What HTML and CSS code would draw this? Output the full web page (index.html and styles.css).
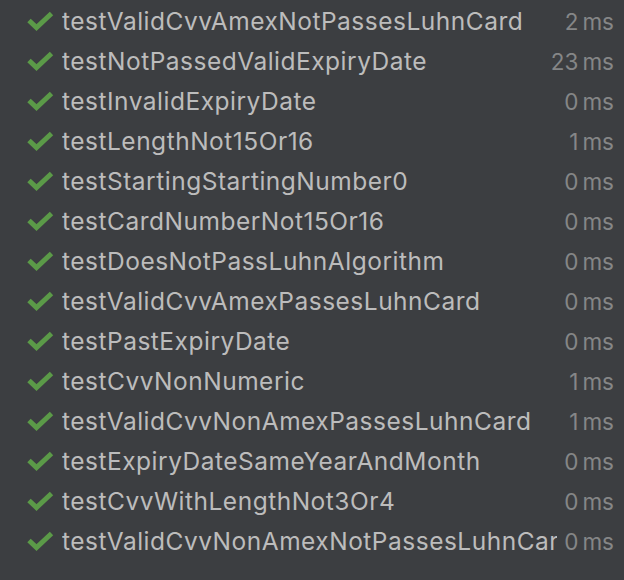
FILE: index.html
```html
<!DOCTYPE html>
<html>
<head>
<meta charset="utf-8">
<link rel="stylesheet" href="styles.css">
</head>
<body>
<div class="list">
  <div class="row"><svg class="check" viewBox="0 0 27 20"><path d="M2 9.5 L9.5 16.5 L24.5 2.5"/></svg><span class="name">testValidCvvAmexNotPassesLuhnCard</span><span class="time">2<span class="unit">ms</span></span></div>
  <div class="row"><svg class="check" viewBox="0 0 27 20"><path d="M2 9.5 L9.5 16.5 L24.5 2.5"/></svg><span class="name">testNotPassedValidExpiryDate</span><span class="time">23<span class="unit">ms</span></span></div>
  <div class="row"><svg class="check" viewBox="0 0 27 20"><path d="M2 9.5 L9.5 16.5 L24.5 2.5"/></svg><span class="name">testInvalidExpiryDate</span><span class="time">0<span class="unit">ms</span></span></div>
  <div class="row"><svg class="check" viewBox="0 0 27 20"><path d="M2 9.5 L9.5 16.5 L24.5 2.5"/></svg><span class="name">testLengthNot15Or16</span><span class="time">1<span class="unit">ms</span></span></div>
  <div class="row"><svg class="check" viewBox="0 0 27 20"><path d="M2 9.5 L9.5 16.5 L24.5 2.5"/></svg><span class="name">testStartingStartingNumber0</span><span class="time">0<span class="unit">ms</span></span></div>
  <div class="row"><svg class="check" viewBox="0 0 27 20"><path d="M2 9.5 L9.5 16.5 L24.5 2.5"/></svg><span class="name">testCardNumberNot15Or16</span><span class="time">0<span class="unit">ms</span></span></div>
  <div class="row"><svg class="check" viewBox="0 0 27 20"><path d="M2 9.5 L9.5 16.5 L24.5 2.5"/></svg><span class="name">testDoesNotPassLuhnAlgorithm</span><span class="time">0<span class="unit">ms</span></span></div>
  <div class="row"><svg class="check" viewBox="0 0 27 20"><path d="M2 9.5 L9.5 16.5 L24.5 2.5"/></svg><span class="name">testValidCvvAmexPassesLuhnCard</span><span class="time">0<span class="unit">ms</span></span></div>
  <div class="row"><svg class="check" viewBox="0 0 27 20"><path d="M2 9.5 L9.5 16.5 L24.5 2.5"/></svg><span class="name">testPastExpiryDate</span><span class="time">0<span class="unit">ms</span></span></div>
  <div class="row"><svg class="check" viewBox="0 0 27 20"><path d="M2 9.5 L9.5 16.5 L24.5 2.5"/></svg><span class="name">testCvvNonNumeric</span><span class="time">1<span class="unit">ms</span></span></div>
  <div class="row"><svg class="check" viewBox="0 0 27 20"><path d="M2 9.5 L9.5 16.5 L24.5 2.5"/></svg><span class="name">testValidCvvNonAmexPassesLuhnCard</span><span class="time">1<span class="unit">ms</span></span></div>
  <div class="row"><svg class="check" viewBox="0 0 27 20"><path d="M2 9.5 L9.5 16.5 L24.5 2.5"/></svg><span class="name">testExpiryDateSameYearAndMonth</span><span class="time">0<span class="unit">ms</span></span></div>
  <div class="row"><svg class="check" viewBox="0 0 27 20"><path d="M2 9.5 L9.5 16.5 L24.5 2.5"/></svg><span class="name">testCvvWithLengthNot3Or4</span><span class="time">0<span class="unit">ms</span></span></div>
  <div class="row"><svg class="check" viewBox="0 0 27 20"><path d="M2 9.5 L9.5 16.5 L24.5 2.5"/></svg><span class="name">testValidCvvNonAmexNotPassesLuhnCard</span><span class="time">0<span class="unit">ms</span></span></div>
</div>
</body>
</html>
```
FILE: styles.css
```css
html, body {
  margin: 0;
  padding: 0;
  background: #3c3e41;
}
body {
  width: 624px;
  height: 580px;
  overflow: hidden;
  font-family: Inter, "Noto Sans", sans-serif;
}
.list {
  display: flex;
  flex-direction: column;
  padding-top: 1px;
}
.row {
  display: flex;
  align-items: center;
  height: 40px;
  padding-left: 27px;
  padding-right: 10px;
}
.check {
  flex: none;
  width: 27px;
  height: 20px;
  margin-right: 8px;
}
.check path {
  fill: none;
  stroke: #5b9a48;
  stroke-width: 5;
}
.name {
  flex: 1;
  min-width: 0;
  overflow: hidden;
  white-space: nowrap;
  color: #bcbcbc;
  font-size: 24.5px;
  letter-spacing: 0.5px;
}
.time {
  flex: none;
  margin-left: 7px;
  color: #858687;
  font-size: 22.5px;
  white-space: nowrap;
}
.unit {
  margin-left: 4px;
}
```
